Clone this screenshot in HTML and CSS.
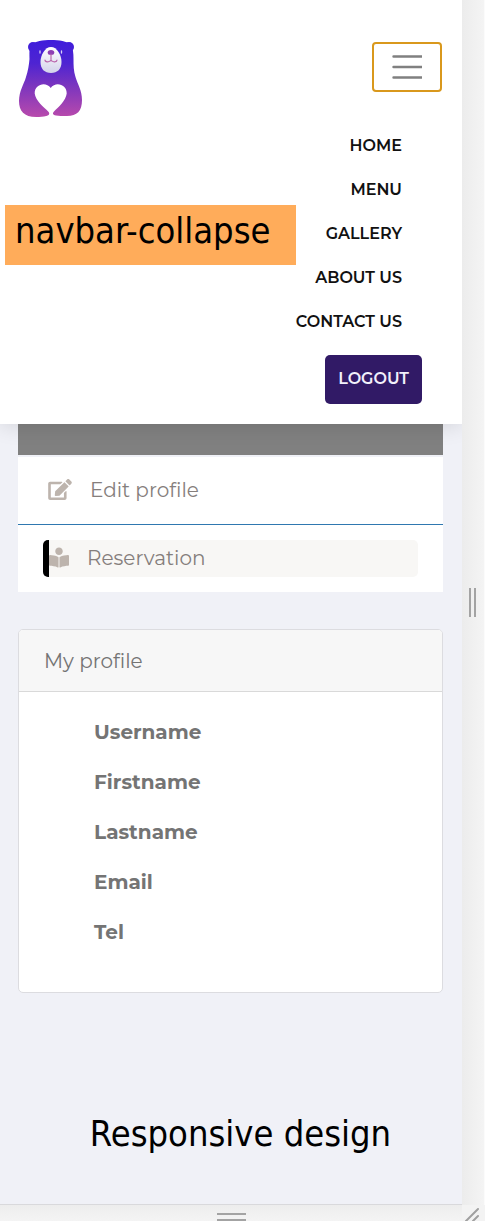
FILE: index.html
```html
<!DOCTYPE html>
<html lang="en">
<head>
<meta charset="utf-8">
<meta name="viewport" content="width=device-width, initial-scale=1">
<title>My profile</title>
<link rel="stylesheet" href="styles.css">
</head>
<body>
<div class="frame">
  <div class="screen">
    <header class="navbar">
      <div class="navbar-top">
        <a class="brand" href="#" aria-label="Home page">
          <svg class="bear" viewBox="0 0 66 80" aria-hidden="true">
            <defs>
              <linearGradient id="fur" gradientUnits="userSpaceOnUse" x1="0" y1="2" x2="0" y2="79">
                <stop offset="0" stop-color="#3f1ddb"/>
                <stop offset="0.3" stop-color="#4e24d2"/>
                <stop offset="0.6" stop-color="#7c35be"/>
                <stop offset="1" stop-color="#b84aac"/>
              </linearGradient>
              <linearGradient id="face" x1="0" y1="0" x2="0" y2="1">
                <stop offset="0" stop-color="#ffffff"/>
                <stop offset="1" stop-color="#d3d3ea"/>
              </linearGradient>
            </defs>
            <g fill="url(#fur)">
              <circle cx="16" cy="9" r="5"/>
              <circle cx="52" cy="9" r="5"/>
              <path d="M14 7C18 3 26 2 34 2s16 1 20 5c2 3 2.500 8 2.500 14 0 6 0 12 2 18 2 7 6.500 13 6.500 23 0 11-5 16-15 16-5 0-8 0-11-.5-3-.5-4-2-2-4 4-4 12-11 12.700-18 .3-9-11-12.500-16-5.500-5-7-16.300-3.500-16 5.500.7 7 9.500 14 13.500 18 2 2 1 4-2 4.500-3 .8-6 1-10 1C7 79 2 73 2 63c0-10 5-17 7-24 2-6 3-12 3.500-18 0-6-.5-11 1.500-14z"/>
            </g>
            <path fill="url(#face)" d="M34 9c6 0 10.500 8 10.500 15 0 7-4 11-10.500 11s-10.500-4-10.500-11C23.500 17 28 9 34 9z"/>
            <ellipse cx="34" cy="14.500" rx="3.300" ry="2.500" fill="#8e3fb4"/>
            <path d="M34 16v7M28 22c0 2 4 3 6 0 2 3 6 2 6 0" fill="none" stroke="#ba68ad" stroke-width="1.200" stroke-linecap="round"/>
            <path d="M23 13v2M44.500 13v2" stroke="#d8d0f8" stroke-width="1.300" stroke-linecap="round"/>
          </svg>
        </a>
        <button class="toggler" type="button" aria-label="Toggle navigation" aria-expanded="true">
          <svg viewBox="0 0 30 30" aria-hidden="true"><path d="M1.500 4.500h28M1.500 15h28M1.500 25.500h28" stroke="#808080" stroke-width="2.400" stroke-linecap="round"/></svg>
        </button>
      </div>
      <div class="collapse">
        <p class="note note-tag">navbar-collapse</p>
        <nav class="menu" aria-label="Main">
          <a href="#">HOME</a>
          <a href="#">MENU</a>
          <a href="#">GALLERY</a>
          <a href="#">ABOUT US</a>
          <a href="#">CONTACT US</a>
          <button class="logout" type="button">LOGOUT</button>
        </nav>
      </div>
    </header>
    <main class="content">
      <div class="banner"></div>
      <section class="links">
        <a class="link" href="#">
          <svg class="icon" viewBox="0 0 576 512" aria-hidden="true"><path d="M402.600 83.200l90.200 90.200c3.800 3.800 3.800 10 0 13.800L274.400 405.600l-92.800 10.300c-12.400 1.400-22.900-9.100-21.500-21.500l10.300-92.800L388.800 83.200c3.800-3.800 10-3.800 13.800 0zm162-22.900l-48.800-48.800c-15.200-15.200-39.900-15.200-55.200 0l-35.400 35.400c-3.800 3.800-3.800 10 0 13.800l90.200 90.200c3.800 3.800 10 3.800 13.800 0l35.400-35.400c15.200-15.300 15.200-40 0-55.200zM384 346.200V448H64V128h229.800c3.200 0 6.200-1.300 8.500-3.500l40-40c7.600-7.600 2.200-20.500-8.500-20.500H48C21.500 64 0 85.500 0 112v352c0 26.500 21.500 48 48 48h352c26.500 0 48-21.500 48-48V306.200c0-10.700-12.900-16-20.500-8.500l-40 40c-2.200 2.300-3.500 5.300-3.500 8.500z"/></svg>
          <span>Edit profile</span>
        </a>
        <div class="link-row">
          <a class="link link-active" href="#">
            <svg class="icon icon-reader" viewBox="0 0 512 512" aria-hidden="true"><path d="M352 96c0-53-43-96-96-96s-96 43-96 96 43 96 96 96 96-43 96-96zM233.600 241.100c-59.300-36.300-155.100-46.900-203.300-49.700C13.600 190.500 0 203.500 0 219.300v222.800c0 14.400 11.600 26.500 26.800 27.300 43.700 2.300 132.500 10.700 196.400 40.600 9.900 4.600 20.800-2.200 20.800-12.500V258.500c.1-7.100-3.800-13.500-10.400-17.400zm248.100-49.700c-48.200 2.700-144 13.400-203.300 49.700-6.600 4-10.400 10.400-10.400 17.400v239c0 10.300 10.900 17.100 20.900 12.500 63.900-29.800 152.500-38.200 196.300-40.500 15.200-.8 26.800-12.900 26.800-27.300V219.300c0-15.800-13.600-28.800-30.300-27.900z"/></svg>
            <span>Reservation</span>
          </a>
        </div>
      </section>
      <section class="card">
        <h1 class="card-title">My profile</h1>
        <ul class="fields">
          <li>Username</li>
          <li>Firstname</li>
          <li>Lastname</li>
          <li>Email</li>
          <li>Tel</li>
        </ul>
      </section>
      <p class="note note-caption">Responsive design</p>
    </main>
  </div>
  <div class="gutter gutter-right"><span class="grip grip-v"></span></div>
  <div class="gutter gutter-bottom"><span class="grip grip-h"></span></div>
  <div class="gutter gutter-corner">
    <svg viewBox="0 0 23 16" aria-hidden="true"><path d="M4 16L16 4M11 16l5-5" stroke="#a0a0a0" stroke-width="2" stroke-linecap="round"/></svg>
  </div>
</div>
</body>
</html>
```
FILE: styles.css
```css
* { box-sizing: border-box; }

body {
  margin: 0;
  background: #f3f3f3;
  color: #747474;
  font-family: Montserrat, Inter, "Liberation Sans", sans-serif;
}

a { color: inherit; text-decoration: none; }
button { font: inherit; cursor: pointer; }

.frame {
  display: grid;
  grid-template-columns: 1fr 23px;
  grid-template-rows: 1fr 16px;
  min-height: 100vh;
}

.screen {
  display: flex;
  flex-direction: column;
  background: #f0f1f7;
  border-bottom: 1px solid #d9d9dc;
}

/* Navigation */
.navbar {
  position: relative;
  padding: 38px 20px 20px 5px;
  background: #fff;
  box-shadow: 0 2px 20px rgba(0, 0, 0, 0.12);
  clip-path: inset(0 0 -30px 0);
}

.navbar-top {
  display: flex;
  justify-content: space-between;
  align-items: flex-start;
  height: 86px;
}

.brand { padding-left: 12px; }
.bear { display: block; width: 66px; height: 80px; }

.toggler {
  display: flex;
  align-items: center;
  justify-content: center;
  width: 70px;
  height: 50px;
  margin-top: 4px;
  padding: 0;
  background: #fff;
  border: 2px solid #d9981c;
  border-radius: 4px;
}
.toggler svg { width: 30px; height: 30px; fill: none; }

.collapse {
  display: flex;
  justify-content: space-between;
  align-items: flex-start;
}

.menu {
  display: flex;
  flex-direction: column;
  align-items: flex-end;
}

.menu a {
  padding: 10px 40px;
  color: #111;
  font-size: 16px;
  font-weight: 600;
  line-height: 24px;
}

.logout {
  height: 49px;
  margin: 11px 20px 0 0;
  padding: 0 13px 2px;
  background: #311a66;
  border: 0;
  border-radius: 5px;
  color: #f2f0fb;
  font-size: 16px;
  font-weight: 600;
}

/* Captions */
.note {
  margin: 0;
  color: #000;
  font-family: Tahoma, "DejaVu Sans Condensed", "DejaVu Sans", sans-serif;
  font-size: 36px;
}

.note-tag {
  flex: none;
  width: 291px;
  margin: 81px -60px 0 0;
  padding: 0 10px 8px;
  background: #ffac5a;
  line-height: 52px;
}

.note-caption {
  margin-top: 116px;
  text-align: center;
  padding-left: 20px;
  line-height: 50px;
}

/* Page content */
.content { padding: 0 19px 44px 18px; }
.banner { height: 31px; background: #808080; }

.links {
  margin-top: 2px;
  background: #fff;
  font-size: 20px;
  font-weight: 400;
}

.link {
  display: flex;
  align-items: center;
  gap: 18px;
  padding: 0 30px 2px;
  height: 68px;
  border-bottom: 1px solid #2f78b0;
  color: #857e7c;
}

.link-row { padding: 15px 25px; }

.link-active {
  height: 37px;
  padding: 0 0 2px;
  background: #f8f7f5;
  border: 0;
  border-left: 6px solid #000;
  border-radius: 5px;
}

.icon { width: 24px; height: 21px; fill: #bdb4ad; }
.icon-reader { width: 20px; }

.card {
  margin-top: 37px;
  min-height: 364px;
  background: #fff;
  border: 1px solid #dcdce0;
  border-radius: 5px;
  overflow: hidden;
}

.card-title {
  margin: 0;
  padding: 16px 25px 15px;
  background: #f7f7f7;
  border-bottom: 1px solid #d9d9d9;
  font-size: 20px;
  font-weight: 400;
  line-height: 30px;
}

.fields {
  margin: 0;
  padding: 15px 75px;
  list-style: none;
  font-size: 20px;
  font-weight: 700;
  line-height: 50px;
}

/* Resizable edges */
.gutter { display: flex; align-items: center; justify-content: center; }
.gutter-right {
  background: linear-gradient(to right, #ececec, #f4f4f4);
  border-right: 1px solid #fbfbfb;
  padding-right: 2px;
}
.gutter-bottom {
  background: linear-gradient(#ededed, #f4f4f4);
  align-items: flex-end;
}

.grip-v {
  width: 7px;
  height: 29px;
  border: solid #a3a3a3;
  border-width: 0 2px;
}
.grip-h {
  width: 29px;
  height: 8px;
  border: solid #a3a3a3;
  border-width: 2px 0;
}
.gutter-corner svg { width: 23px; height: 16px; fill: none; }
```
